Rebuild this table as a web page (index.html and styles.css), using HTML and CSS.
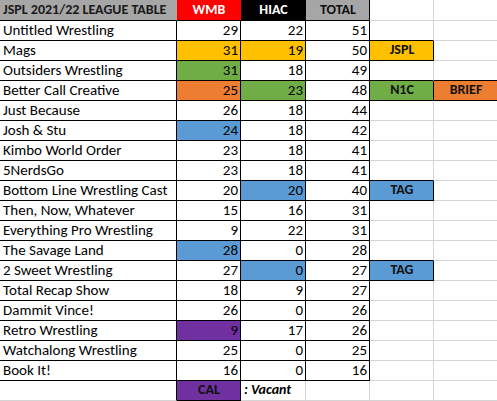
FILE: index.html
```html
<!DOCTYPE html>
<html>
<head>
<meta charset="utf-8">
<link rel="stylesheet" href="styles.css">
</head>
<body>
<div class="sheet">
  <div class="cell hd hd-a">JSPL 2021/22 LEAGUE TABLE</div>
  <div class="cell hd hd-wmb">WMB</div>
  <div class="cell hd hd-hiac">HIAC</div>
  <div class="cell hd hd-total">TOTAL</div>
  <div class="cell grid"></div>
  <div class="cell grid"></div>

  <div class="cell t name">Untitled Wrestling</div>
  <div class="cell t num">29</div>
  <div class="cell t num">22</div>
  <div class="cell t num">51</div>
  <div class="cell grid bb"></div>
  <div class="cell grid"></div>

  <div class="cell t name">Mags</div>
  <div class="cell t num gold">31</div>
  <div class="cell t num gold">19</div>
  <div class="cell t num">50</div>
  <div class="cell t tag gold">JSPL</div>
  <div class="cell grid"></div>

  <div class="cell t name">Outsiders Wrestling</div>
  <div class="cell t num green">31</div>
  <div class="cell t num">18</div>
  <div class="cell t num">49</div>
  <div class="cell grid bb"></div>
  <div class="cell grid bb"></div>

  <div class="cell t name">Better Call Creative</div>
  <div class="cell t num orange">25</div>
  <div class="cell t num green">23</div>
  <div class="cell t num">48</div>
  <div class="cell t tag green">N1C</div>
  <div class="cell t tag orange">BRIEF</div>

  <div class="cell t name">Just Because</div>
  <div class="cell t num">26</div>
  <div class="cell t num">18</div>
  <div class="cell t num">44</div>
  <div class="cell grid"></div>
  <div class="cell grid"></div>

  <div class="cell t name">Josh &amp; Stu</div>
  <div class="cell t num blue">24</div>
  <div class="cell t num">18</div>
  <div class="cell t num">42</div>
  <div class="cell grid"></div>
  <div class="cell grid"></div>

  <div class="cell t name">Kimbo World Order</div>
  <div class="cell t num">23</div>
  <div class="cell t num">18</div>
  <div class="cell t num">41</div>
  <div class="cell grid"></div>
  <div class="cell grid"></div>

  <div class="cell t name">5NerdsGo</div>
  <div class="cell t num">23</div>
  <div class="cell t num">18</div>
  <div class="cell t num">41</div>
  <div class="cell grid bb"></div>
  <div class="cell grid"></div>

  <div class="cell t name">Bottom Line Wrestling Cast</div>
  <div class="cell t num">20</div>
  <div class="cell t num blue">20</div>
  <div class="cell t num">40</div>
  <div class="cell t tag blue">TAG</div>
  <div class="cell grid"></div>

  <div class="cell t name">Then, Now, Whatever</div>
  <div class="cell t num">15</div>
  <div class="cell t num">16</div>
  <div class="cell t num">31</div>
  <div class="cell grid"></div>
  <div class="cell grid"></div>

  <div class="cell t name">Everything Pro Wrestling</div>
  <div class="cell t num">9</div>
  <div class="cell t num">22</div>
  <div class="cell t num">31</div>
  <div class="cell grid"></div>
  <div class="cell grid"></div>

  <div class="cell t name">The Savage Land</div>
  <div class="cell t num blue">28</div>
  <div class="cell t num">0</div>
  <div class="cell t num">28</div>
  <div class="cell grid bb"></div>
  <div class="cell grid"></div>

  <div class="cell t name">2 Sweet Wrestling</div>
  <div class="cell t num">27</div>
  <div class="cell t num blue">0</div>
  <div class="cell t num">27</div>
  <div class="cell t tag blue">TAG</div>
  <div class="cell grid"></div>

  <div class="cell t name">Total Recap Show</div>
  <div class="cell t num">18</div>
  <div class="cell t num">9</div>
  <div class="cell t num">27</div>
  <div class="cell grid"></div>
  <div class="cell grid"></div>

  <div class="cell t name">Dammit Vince!</div>
  <div class="cell t num">26</div>
  <div class="cell t num">0</div>
  <div class="cell t num">26</div>
  <div class="cell grid"></div>
  <div class="cell grid"></div>

  <div class="cell t name">Retro Wrestling</div>
  <div class="cell t num purple">9</div>
  <div class="cell t num">17</div>
  <div class="cell t num">26</div>
  <div class="cell grid"></div>
  <div class="cell grid"></div>

  <div class="cell t name">Watchalong Wrestling</div>
  <div class="cell t num">25</div>
  <div class="cell t num">0</div>
  <div class="cell t num">25</div>
  <div class="cell grid"></div>
  <div class="cell grid"></div>

  <div class="cell t name">Book It!</div>
  <div class="cell t num">16</div>
  <div class="cell t num">0</div>
  <div class="cell t num">16</div>
  <div class="cell grid"></div>
  <div class="cell grid"></div>

  <div class="cell grid br"></div>
  <div class="cell t tag purple">CAL</div>
  <div class="cell grid note">: Vacant</div>
  <div class="cell grid"></div>
  <div class="cell grid"></div>
  <div class="cell grid"></div>
</div>
</body>
</html>
```

FILE: styles.css
```css
html, body {
  margin: 0;
  padding: 0;
  background: #ffffff;
  overflow: hidden;
}

.sheet {
  display: grid;
  grid-template-columns: 177px 64px 65px 64px 64px 64px;
  grid-template-rows: 21px repeat(19, 20px);
  width: 498px;
  font-family: Carlito, "Open Sans", "Liberation Sans", sans-serif;
  font-size: 15px;
  color: #000000;
}

.cell {
  box-sizing: border-box;
  display: flex;
  align-items: flex-end;
  padding: 0 2px 1px 3px;
  line-height: 18px;
  white-space: nowrap;
  border-right: 1px solid #d4d4d4;
  border-bottom: 1px solid #d4d4d4;
}

.t {
  border-right-color: #000000;
  border-bottom-color: #000000;
}

.bb { border-bottom-color: #000000; }
.br { border-right-color: #000000; }

.num { justify-content: flex-end; }

.tag {
  justify-content: center;
  font-weight: bold;
  font-size: 14px;
  color: #111111;
}

.note {
  font-weight: bold;
  font-style: italic;
  font-size: 14px;
  overflow: visible;
  padding-left: 3px;
}

.hd {
  font-weight: bold;
  font-size: 14px;
  border-bottom-color: #000000;
}

.hd-a {
  background: #a6a6a6;
  color: #1a1a1a;
  border-right-color: #a6a6a6;
}

.hd-wmb {
  background: #ff0000;
  color: #ffffff;
  justify-content: center;
  border-right-color: #ff0000;
}

.hd-hiac {
  background: #000000;
  color: #ffffff;
  justify-content: center;
  border-right-color: #000000;
}

.hd-total {
  background: #a6a6a6;
  color: #111111;
  justify-content: center;
  border-right-color: #000000;
}

.gold { background: #ffc000; }
.green { background: #70ad47; }
.orange { background: #ed7d31; }
.blue { background: #5b9bd5; }
.purple { background: #7030a0; }
```
